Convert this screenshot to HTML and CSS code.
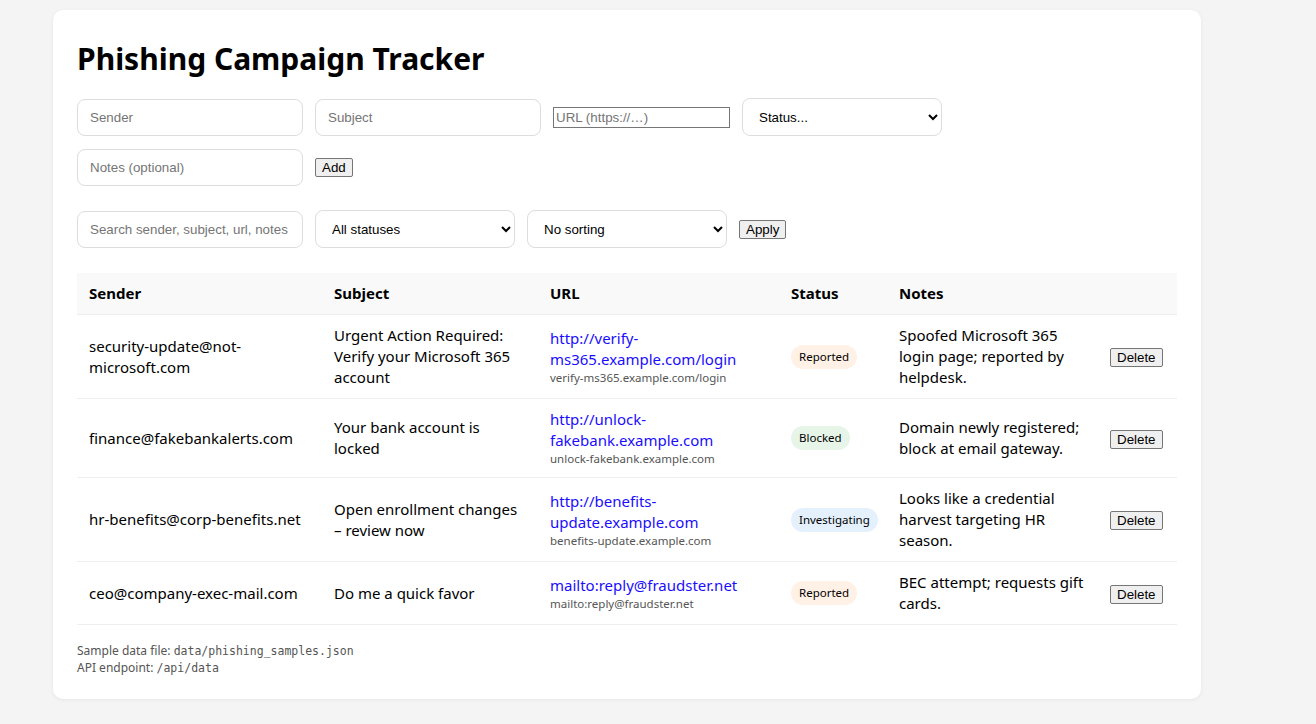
FILE: index.html
```html
<!DOCTYPE html>
<html lang="en">
<head>
<meta charset="utf-8">
<title>Phishing Campaign Tracker</title>
<link rel="stylesheet" href="styles.css">
</head>
<body>
<main class="card">
  <h1 class="title">Phishing Campaign Tracker</h1>
  <form class="add-form">
    <input class="field" type="text" placeholder="Sender">
    <input class="field" type="text" placeholder="Subject">
    <input class="url-field" type="url" placeholder="URL (https://…)">
    <select class="select">
      <option>Status...</option>
    </select>
    <input class="field" type="text" placeholder="Notes (optional)">
    <button type="button" class="btn">Add</button>
  </form>
  <div class="filters">
    <input class="field" type="text" placeholder="Search sender, subject, url, notes">
    <select class="select"><option>All statuses</option></select>
    <select class="select"><option>No sorting</option></select>
    <button type="button" class="btn">Apply</button>
  </div>
  <table class="table">
    <colgroup>
      <col class="c-sender"><col class="c-subject"><col class="c-url"><col class="c-status"><col class="c-notes"><col class="c-act">
    </colgroup>
    <thead>
      <tr><th>Sender</th><th>Subject</th><th>URL</th><th>Status</th><th>Notes</th><th></th></tr>
    </thead>
    <tbody>
      <tr>
        <td>security-update@not-microsoft.com</td>
        <td>Urgent Action Required: Verify your Microsoft 365 account</td>
        <td><a class="link" href="#">http://verify-ms365.example.com/login</a><div class="host">verify-ms365.example.com/login</div></td>
        <td><span class="badge reported">Reported</span></td>
        <td>Spoofed Microsoft 365 login page; reported by helpdesk.</td>
        <td><button type="button" class="btn">Delete</button></td>
      </tr>
      <tr>
        <td>finance@fakebankalerts.com</td>
        <td>Your bank account is locked</td>
        <td><a class="link" href="#">http://unlock-fakebank.example.com</a><div class="host">unlock-fakebank.example.com</div></td>
        <td><span class="badge blocked">Blocked</span></td>
        <td>Domain newly registered; block at email gateway.</td>
        <td><button type="button" class="btn">Delete</button></td>
      </tr>
      <tr>
        <td>hr-benefits@corp-benefits.net</td>
        <td>Open enrollment changes – review now</td>
        <td><a class="link" href="#">http://benefits-update.example.com</a><div class="host">benefits-update.example.com</div></td>
        <td><span class="badge investigating">Investigating</span></td>
        <td>Looks like a credential harvest targeting HR season.</td>
        <td><button type="button" class="btn">Delete</button></td>
      </tr>
      <tr>
        <td>ceo@company-exec-mail.com</td>
        <td>Do me a quick favor</td>
        <td><a class="link" href="#">mailto:reply@fraudster.net</a><div class="host">mailto:reply@fraudster.net</div></td>
        <td><span class="badge reported">Reported</span></td>
        <td>BEC attempt; requests gift cards.</td>
        <td><button type="button" class="btn">Delete</button></td>
      </tr>
    </tbody>
  </table>
  <footer class="foot">
    <div class="foot-line">Sample data file: <code>data/phishing_samples.json</code></div>
    <div class="foot-line">API endpoint: <code>/api/data</code></div>
  </footer>
</main>
</body>
</html>
```

FILE: styles.css
```css
html, body {
  margin: 0;
  background: #f4f4f4;
}
body {
  padding: 10px 0 10px 53px;
  font-family: "Noto Sans", "Open Sans", sans-serif;
  color: #000;
}
.card {
  box-sizing: border-box;
  width: 1148px;
  background: #fff;
  border-radius: 10px;
  padding: 24px 24px 23px;
  box-shadow: 0 1px 4px rgba(0,0,0,0.06);
}
.title {
  margin: 3px 0 18px;
  font-size: 30px;
  line-height: 43px;
  font-weight: 700;
}
.add-form, .filters {
  display: flex;
  flex-wrap: wrap;
  gap: 13px 12px;
  align-items: center;
}
.add-form { margin-bottom: 24px; }
.filters { margin-bottom: 25px; }
.field, .select {
  box-sizing: border-box;
  font-family: "Liberation Sans", Arial, sans-serif;
  font-size: 13.333px;
  border: 1px solid #ddd;
  border-radius: 8px;
  background: #fff;
  color: #000;
}
.field {
  width: 226px;
  height: 37px;
  padding: 0 12px;
}
.field::placeholder { color: #757575; }
.select {
  width: 200px;
  height: 38px;
  padding: 0 12px;
}
.url-field {
  font-family: "Liberation Sans", Arial, sans-serif;
  font-size: 13.333px;
  width: 177px;
  height: 21px;
  box-sizing: border-box;
  border: 1px solid #767676;
  padding: 1px 2px;
}
.btn {
  font-family: "Liberation Sans", Arial, sans-serif;
  font-size: 13.333px;
  padding: 1px 6px;
  border: 1px solid #767676;
  border-radius: 2px;
  background: #efefef;
  color: #000;
}
.table {
  width: 1100px;
  border-collapse: collapse;
  table-layout: fixed;
  font-size: 15px;
  line-height: 21px;
}
.c-sender { width: 245px; }
.c-subject { width: 216px; }
.c-url { width: 241px; }
.c-status { width: 108px; }
.c-notes { width: 211px; }
.c-act { width: 79px; }
.table th {
  text-align: left;
  background: #f9f9f9;
  font-weight: 700;
  padding: 10px 12px;
  border-bottom: 1px solid #eee;
}
.table td {
  padding: 10px 12px;
  border-bottom: 1px solid #eee;
  vertical-align: middle;
}
.link {
  color: #1a0dff;
  text-decoration: none;
}
.host {
  font-size: 11.5px;
  line-height: 16px;
  color: #555;
}
.badge {
  display: inline-block;
  font-size: 11.5px;
  line-height: 16px;
  padding: 4px 8px;
  border-radius: 999px;
}
.reported { background: #fff1e5; }
.blocked { background: #e7f5e9; }
.investigating { background: #e4f1fd; }
.foot {
  margin-top: 17px;
  font-size: 12px;
  color: #555;
}
.foot-line {
  height: 17px;
  line-height: 17px;
}
.foot code {
  font-family: "DejaVu Sans Mono", "Liberation Mono", monospace;
  font-size: 11.5px;
  line-height: 1;
}
```
